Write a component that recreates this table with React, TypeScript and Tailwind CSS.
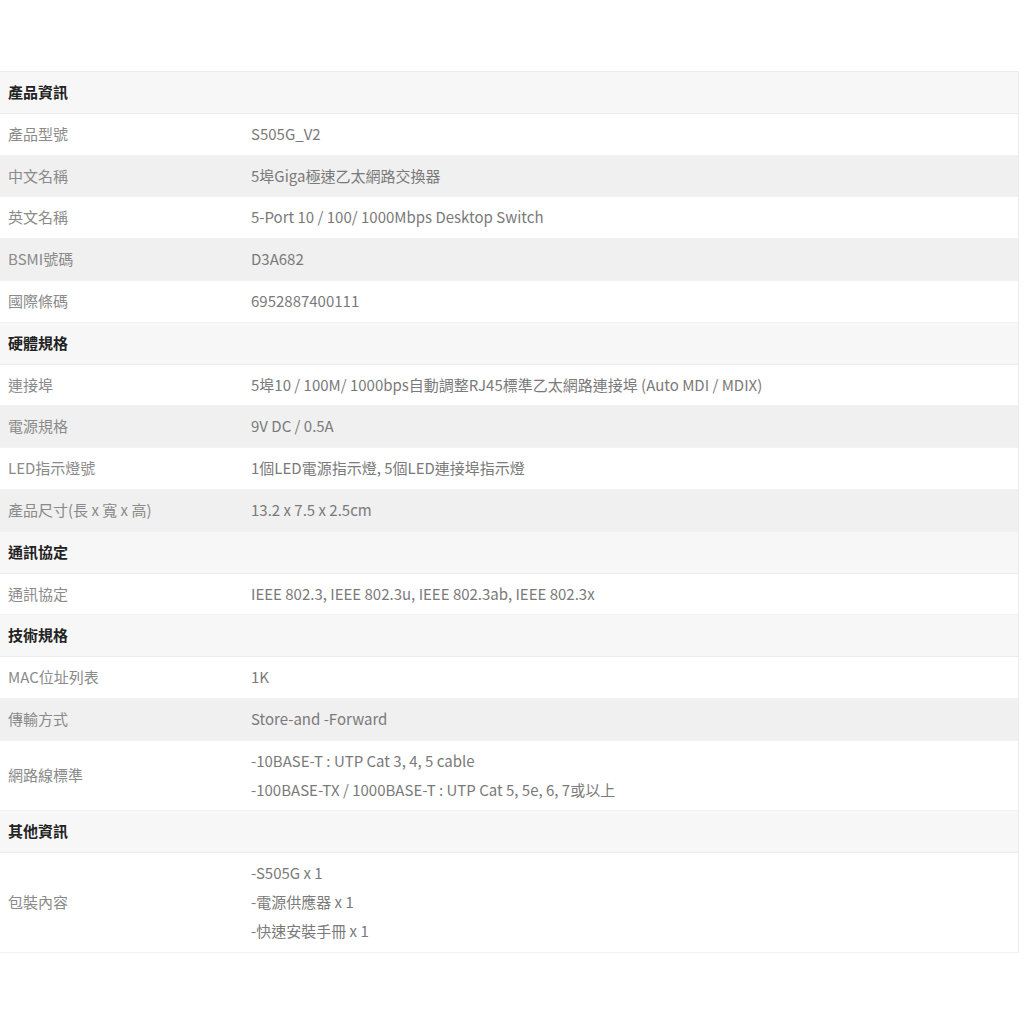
type Row = { label: string; value: string[] };
type Section = { title: string; rows: Row[] };

const SECTIONS: Section[] = [
  {
    title: "產品資訊",
    rows: [
      { label: "產品型號", value: ["S505G_V2"] },
      { label: "中文名稱", value: ["5埠Giga極速乙太網路交換器"] },
      { label: "英文名稱", value: ["5-Port 10 / 100/ 1000Mbps Desktop Switch"] },
      { label: "BSMI號碼", value: ["D3A682"] },
      { label: "國際條碼", value: ["6952887400111"] },
    ],
  },
  {
    title: "硬體規格",
    rows: [
      { label: "連接埠", value: ["5埠10 / 100M/ 1000bps自動調整RJ45標準乙太網路連接埠 (Auto MDI / MDIX)"] },
      { label: "電源規格", value: ["9V DC / 0.5A"] },
      { label: "LED指示燈號", value: ["1個LED電源指示燈, 5個LED連接埠指示燈"] },
      { label: "產品尺寸(長 x 寬 x 高)", value: ["13.2 x 7.5 x 2.5cm"] },
    ],
  },
  {
    title: "通訊協定",
    rows: [{ label: "通訊協定", value: ["IEEE 802.3, IEEE 802.3u, IEEE 802.3ab, IEEE 802.3x"] }],
  },
  {
    title: "技術規格",
    rows: [
      { label: "MAC位址列表", value: ["1K"] },
      { label: "傳輸方式", value: ["Store-and -Forward"] },
      {
        label: "網路線標準",
        value: ["-10BASE-T : UTP Cat 3, 4, 5 cable", "-100BASE-TX / 1000BASE-T : UTP Cat 5, 5e, 6, 7或以上"],
      },
    ],
  },
  {
    title: "其他資訊",
    rows: [{ label: "包裝內容", value: ["-S505G x 1", "-電源供應器 x 1", "-快速安裝手冊 x 1"] }],
  },
];

export default function App() {
  return (
    <div
      className="min-h-screen bg-white pt-[71px] text-[15px] leading-[28.8px]"
      style={{ fontFamily: '"Noto Sans CJK TC", "Noto Sans", sans-serif' }}
    >
      <div className="w-[1019px] border-t border-r border-[#ececec]">
        {SECTIONS.map((section) => (
          <div key={section.title}>
            <div className="border-b border-[#ebebeb] bg-[#f7f7f7] px-2 py-[6px] font-bold text-[#222]">
              {section.title}
            </div>
            {section.rows.map((row, i) => (
              <div
                key={row.label}
                className={`flex items-center border-b border-[#f2f2f2] py-[6px] ${i % 2 === 1 ? "bg-[#f0f0f0]" : "bg-white"}`}
              >
                <div className="w-[251px] shrink-0 pl-2 text-[#8a8a8a]">{row.label}</div>
                <div className="flex flex-col text-[#7a7a7a]">
                  {row.value.map((line) => (
                    <span key={line}>{line}</span>
                  ))}
                </div>
              </div>
            ))}
          </div>
        ))}
      </div>
    </div>
  );
}
